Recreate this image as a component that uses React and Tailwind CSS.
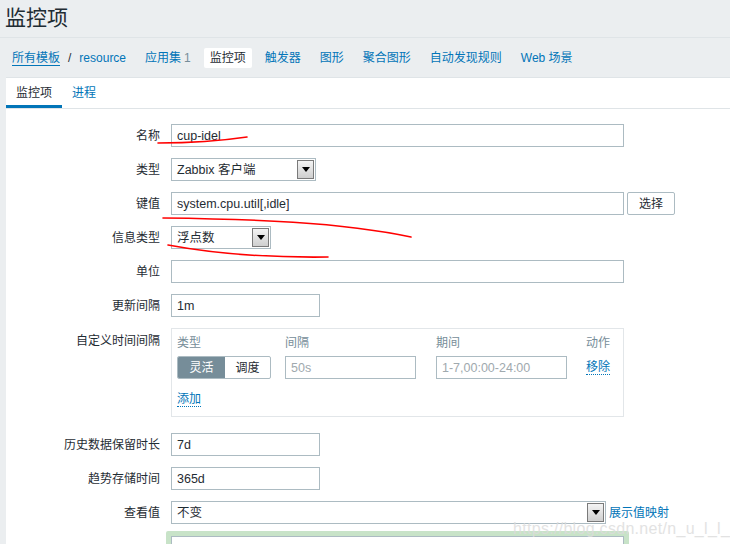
import React from "react";

const font = { fontFamily: '"Liberation Sans","Noto Sans CJK SC",sans-serif' };

function Arrow() {
  return (
    <div className="absolute right-px top-px bottom-px w-[17px] border border-[#7a7a7a] bg-gradient-to-b from-[#f4f4f4] to-[#cfcfcf] flex items-center justify-center">
      <svg width="8" height="5" viewBox="0 0 8 5"><path d="M0 0H8L4 5Z" fill="#000" /></svg>
    </div>
  );
}

function Input({ w, value, ph, className = "" }) {
  return (
    <div className={`h-[23px] border border-[#acbbc2] bg-white flex items-center pl-[5px] pt-px text-[12.5px] ${ph ? "text-[#a0a9ae]" : "text-[#1f2c33]"} ${className}`} style={{ width: w }}>
      {value}
    </div>
  );
}

function Select({ w, value }) {
  return (
    <div className="relative h-[23px] border border-[#acbbc2] bg-white flex items-center pl-[5px] pt-px text-[12.5px] text-[#1f2c33]" style={{ width: w }}>
      {value}
      <Arrow />
    </div>
  );
}

function Row({ label, children, top = false, mb = "mb-[11px]" }) {
  return (
    <div className={`flex ${top ? "items-start" : "items-center"} ${mb}`}>
      <div className={`w-[154px] text-right text-[12px] text-[#1f2c33] ${top ? "pt-[4px]" : ""}`}>{label}</div>
      <div className="ml-[11px] flex items-center">{children}</div>
    </div>
  );
}

export default function App() {
  return (
    <div className="relative w-[730px] h-[544px] overflow-hidden bg-[#ebeef0]" style={font}>
      <div className="h-[38px] pl-[5px] pt-[4px] text-[21px] leading-[28px] text-[#1f2c33] border-b border-[#dfe4e7]">监控项</div>
      <div className="h-[39px] flex items-center pl-[6px] pt-px gap-[7px] text-[12px] text-[#0275b8]">
        <div className="flex items-center px-[6px]">
          <span className="border-b border-[#0275b8] leading-[14px]">所有模板</span>
          <span className="mx-[8px] text-[#1f2c33]">/</span>
          <span>resource</span>
        </div>
        <div className="px-[6px]">应用集<span className="text-[#768d99] ml-[3px]">1</span></div>
        <div className="px-[6px] h-[20px] flex items-center bg-white rounded-[2px] text-[#1f2c33]">监控项</div>
        <div className="px-[6px]">触发器</div>
        <div className="px-[6px]">图形</div>
        <div className="px-[6px]">聚合图形</div>
        <div className="px-[6px]">自动发现规则</div>
        <div className="px-[6px]">Web 场景</div>
      </div>
      <div className="ml-[6px] bg-white border-t border-[#dfe4e7] h-[467px]">
        <div className="flex h-[31px] border-b border-[#dfe4e7] text-[12px]">
          <div className="w-[56px] flex items-center justify-center border-b-[3px] border-[#0275b8] text-[#1f2c33] pt-[2px]">监控项</div>
          <div className="ml-[10px] flex items-center text-[#0275b8] pb-[1px]">进程</div>
        </div>
        <div className="pt-[15px]">
          <Row label="名称"><Input w={453} value="cup-idel" /></Row>
          <Row label="类型"><Select w={145} value="Zabbix 客户端" /></Row>
          <Row label="键值">
            <Input w={453} value="system.cpu.util[,idle]" />
            <div className="ml-[3px] h-[23px] w-[48px] border border-[#acbbc2] rounded-[2px] flex items-center justify-center text-[12px] text-[#1f2c33]">选择</div>
          </Row>
          <Row label="信息类型"><Select w={100} value="浮点数" /></Row>
          <Row label="单位"><Input w={453} value="" /></Row>
          <Row label="更新间隔"><Input w={149} value="1m" /></Row>
          <Row label="自定义时间间隔" top mb="mb-[16px]">
            <div className="w-[453px] h-[89px] border border-[#e2e6e9] px-[5px] pt-[6px] text-[12px]">
              <div className="flex text-[#768d99] h-[16px] items-center">
                <div className="w-[108px]">类型</div>
                <div className="w-[151px]">间隔</div>
                <div className="w-[150px]">期间</div>
                <div>动作</div>
              </div>
              <div className="flex items-center mt-[5px]">
                <div className="w-[94px] h-[23px] flex border border-[#acbbc2] rounded-[2px] overflow-hidden">
                  <div className="w-[47px] bg-[#768d99] text-white flex items-center justify-center">灵活</div>
                  <div className="flex-1 flex items-center justify-center text-[#1f2c33]">调度</div>
                </div>
                <Input w={131} value="50s" ph className="ml-[14px]" />
                <Input w={131} value="1-7,00:00-24:00" ph className="ml-[20px]" />
                <span className="ml-[19px] text-[#0275b8] border-b border-dotted border-[#0275b8] leading-[14px]">移除</span>
              </div>
              <div className="mt-[11px]">
                <span className="text-[#0275b8] border-b border-dotted border-[#0275b8] leading-[14px]">添加</span>
              </div>
            </div>
          </Row>
          <Row label="历史数据保留时长"><Input w={149} value="7d" /></Row>
          <Row label="趋势存储时间"><Input w={149} value="365d" /></Row>
          <Row label="查看值">
            <Select w={435} value="不变" />
            <span className="ml-[3px] text-[12px] text-[#0275b8]">展示值映射</span>
          </Row>
          <div className="flex items-start">
            <div className="w-[154px] text-right text-[12px] text-[#1f2c33] pt-[9px]">新的应用集</div>
            <div className="ml-[6px] -mt-[4px] border-[5px] border-[#c8e3c8] rounded-[2px]">
              <div className="w-[453px] h-[23px] border border-[#acbbc2] bg-white" />
            </div>
          </div>
        </div>
      </div>
      <svg className="absolute left-0 top-0 pointer-events-none" width="730" height="544" viewBox="0 0 730 544" fill="none">
        <path d="M158 143 C190 143 220 141 247 137" stroke="#f00" strokeWidth="1.6" strokeLinecap="round" />
        <path d="M163 218 C250 219 340 222 411 237" stroke="#f00" strokeWidth="1.6" strokeLinecap="round" />
        <path d="M168 245 C200 251 250 258 328 257" stroke="#f00" strokeWidth="1.6" strokeLinecap="round" />
      </svg>
      <div className="absolute left-[513px] top-[517px] text-[16px] text-[#dcdcdc] opacity-80 pointer-events-none tracking-[0.3px]">https://blog.csdn.net/n_u_l_l_</div>
    </div>
  );
}
